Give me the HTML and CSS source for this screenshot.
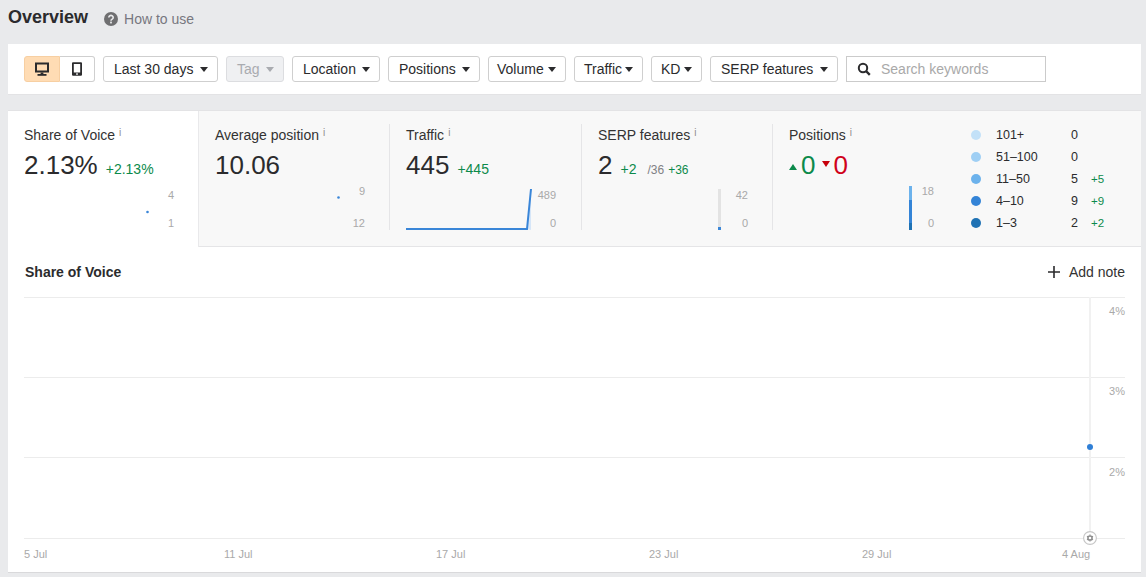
FILE: index.html
```html
<!DOCTYPE html>
<html lang="en">
<head>
<meta charset="utf-8">
<title>Overview</title>
<link rel="stylesheet" href="styles.css">
</head>
<body>
<header class="page-head">
  <h1 class="title">Overview</h1>
  <a class="howto">
    <svg class="help-icon" viewBox="0 0 14 14" width="14" height="14"><circle cx="7" cy="7" r="7" fill="#6f6f71"/><path d="M4.8 5.4a2.2 2 0 1 1 3.4 1.7c-.8.5-1.2.8-1.2 1.6" fill="none" stroke="#e9eaec" stroke-width="1.6"/><rect x="6.1" y="9.6" width="1.8" height="1.8" fill="#e9eaec"/></svg>
    How to use
  </a>
</header>

<section class="toolbar">
  <div class="device-toggle">
    <button class="device active">
      <svg viewBox="0 0 14 14" width="14" height="14"><path d="M0 0.5h14v10H0z M2 2.5v6h10v-6z" fill="#2b2b2d" fill-rule="evenodd"/><rect x="5.6" y="10.5" width="2.8" height="1.5" fill="#2b2b2d"/><rect x="2.5" y="12" width="9" height="1.8" fill="#2b2b2d"/></svg>
    </button>
    <button class="device">
      <svg viewBox="0 0 14 14" width="14" height="14"><path d="M3 0.2h8a1 1 0 0 1 1 1v11.6a1 1 0 0 1-1 1H3a1 1 0 0 1-1-1V1.200a1 1 0 0 1 1-1z M3.800 2v8.400h6.400V2z" fill="#2b2b2d" fill-rule="evenodd"/><rect x="6.200" y="11.300" width="1.600" height="1.500" fill="#fff"/></svg>
    </button>
  </div>
  <button class="drop w-date">Last 30 days<i class="caret"></i></button>
  <button class="drop w-tag disabled">Tag<i class="caret"></i></button>
  <button class="drop w-loc">Location<i class="caret"></i></button>
  <button class="drop w-pos">Positions<i class="caret"></i></button>
  <button class="drop w-vol">Volume<i class="caret"></i></button>
  <button class="drop w-tra">Traffic<i class="caret"></i></button>
  <button class="drop w-kd">KD<i class="caret"></i></button>
  <button class="drop w-serp">SERP features<i class="caret"></i></button>
  <label class="search">
    <svg viewBox="0 0 14 14" width="14" height="14"><circle cx="6" cy="6" r="4.2" fill="none" stroke="#2b2b2d" stroke-width="2"/><path d="M9 9l3.800 3.800" stroke="#2b2b2d" stroke-width="2.400"/></svg>
    <span class="placeholder">Search keywords</span>
  </label>
</section>

<section class="report">
  <div class="tabs">
    <article class="tab active">
      <div class="inner">
        <div class="label">Share of Voice<sup>i</sup></div>
        <div class="value">2.13%<span class="delta">+2.13%</span></div>
        <div class="spark">
          <svg class="plot" width="132" height="42" viewBox="0 0 132 42"><circle cx="123.500" cy="24" r="1.300" fill="#3a86d8"/></svg>
          <div class="axis axis-low"><span>4</span><span>1</span></div>
        </div>
      </div>
    </article>
    <article class="tab sep">
      <div class="inner">
        <div class="label">Average position<sup>i</sup></div>
        <div class="value">10.06</div>
        <div class="spark">
          <svg class="plot" width="132" height="42" viewBox="0 0 132 42"><circle cx="123.500" cy="9.500" r="1.300" fill="#3a86d8"/></svg>
          <div class="axis axis-high"><span>9</span><span>12</span></div>
        </div>
      </div>
    </article>
    <article class="tab sep">
      <div class="inner">
        <div class="label">Traffic<sup>i</sup></div>
        <div class="value">445<span class="delta">+445</span></div>
        <div class="spark">
          <svg class="plot" width="132" height="42" viewBox="0 0 132 42"><path d="M121 41L125 1V42z" fill="#d6e6f8"/><path d="M0 41H121L125 1" fill="none" stroke="#3a86d8" stroke-width="2"/></svg>
          <div class="axis axis-low"><span>489</span><span>0</span></div>
        </div>
      </div>
    </article>
    <article class="tab sep">
      <div class="inner">
        <div class="label">SERP features<sup>i</sup></div>
        <div class="value">2<span class="delta">+2</span><span class="total">/36</span><span class="delta-tight">+36</span></div>
        <div class="spark">
          <svg class="plot" width="132" height="42" viewBox="0 0 132 42"><rect x="120" y="1" width="3" height="38" fill="#e3e3e3"/><rect x="120" y="39" width="3" height="3" fill="#3a86d8"/></svg>
          <div class="axis axis-low"><span>42</span><span>0</span></div>
        </div>
      </div>
    </article>
    <article class="tab positions">
      <div class="inner">
        <div class="label">Positions<sup>i</sup></div>
        <div class="value"><i class="tri up"></i><span class="pos-up">0</span><i class="tri down"></i><span class="pos-down">0</span></div>
        <div class="spark">
          <svg class="plot" width="132" height="42" viewBox="0 0 132 42"><rect x="120" y="-2" width="3" height="14" fill="#6cb2ec"/><rect x="120" y="12" width="3" height="23" fill="#3484d7"/><rect x="120" y="35" width="3" height="7" fill="#1f72b4"/></svg>
          <div class="axis axis-high"><span>18</span><span>0</span></div>
        </div>
      </div>
      <ul class="legend">
        <li><i class="dot d1"></i><span class="range">101+</span><span class="num">0</span></li>
        <li><i class="dot d2"></i><span class="range">51–100</span><span class="num">0</span></li>
        <li><i class="dot d3"></i><span class="range">11–50</span><span class="num">5</span><span class="plus">+5</span></li>
        <li><i class="dot d4"></i><span class="range">4–10</span><span class="num">9</span><span class="plus">+9</span></li>
        <li><i class="dot d5"></i><span class="range">1–3</span><span class="num">2</span><span class="plus">+2</span></li>
      </ul>
    </article>
  </div>

  <div class="chart-head">
    <h2 class="chart-title">Share of Voice</h2>
    <a class="add-note"><svg viewBox="0 0 12 12" width="12" height="12"><path d="M6 0v12M0 6h12" stroke="#2b2b2d" stroke-width="1.600"/></svg>Add note</a>
  </div>

  <div class="chart">
    <div class="band"><span>4%</span></div>
    <div class="band"><span>3%</span></div>
    <div class="band band-last"><span>2%</span></div>
    <div class="baseline"></div>
    <div class="cursor"></div>
    <div class="point"></div>
    <div class="marker"><svg viewBox="0 0 14 14" width="14" height="14"><circle cx="7" cy="7" r="6.400" fill="#fff" stroke="#c6c6c6" stroke-width="1.100"/><circle cx="7" cy="7" r="2.100" fill="none" stroke="#8c8c8c" stroke-width="1.500"/><path d="M7 3.600v1M7 9.400v1M4 5.300l.9.500M9.100 8.200l.9.500M4 8.700l.9-.5M9.100 5.800l.9-.5" stroke="#8c8c8c" stroke-width="1.200"/></svg></div>
  </div>
  <div class="ticks"><span>5 Jul</span><span>11 Jul</span><span>17 Jul</span><span>23 Jul</span><span>29 Jul</span><span>4 Aug</span></div>
</section>
</body>
</html>
```

FILE: styles.css
```css
* { box-sizing: border-box; }
html, body { height: 100%; }
body {
  margin: 0;
  padding: 0 5px 0 8px;
  height: 577px;
  overflow: hidden;
  background: #e9eaec;
  color: #2b2b2d;
  font-family: "Liberation Sans", Arial, sans-serif;
  font-size: 14px;
}
button { font: inherit; color: inherit; margin: 0; }

.page-head { display: flex; align-items: center; height: 44px; padding-bottom: 8px; }
.title { margin: 0; font-size: 18px; font-weight: 700; line-height: 20px; color: #2b2b2d; position: relative; top: -1px; }
.howto { display: flex; align-items: center; gap: 6px; margin-left: 16px; color: #77777f; font-size: 14px; position: relative; top: 1px; }
.help-icon { display: block; }

.toolbar {
  display: flex;
  align-items: center;
  gap: 8px;
  height: 51px;
  padding: 0 16px;
  background: #fff;
  border-bottom: 1px solid #e3e3e5;
}
.device-toggle { display: flex; height: 26px; width: 71px; }
.device {
  flex: 1;
  display: flex;
  align-items: center;
  justify-content: center;
  padding: 0;
  background: #fff;
  border: 1px solid #cfcfcf;
  border-left: 0;
  border-radius: 0 3px 3px 0;
}
.device.active { background: #ffdcb4; border: 1px solid #f7cfa2; border-radius: 3px 0 0 3px; }
.drop {
  display: flex;
  align-items: center;
  justify-content: space-between;
  height: 26px;
  padding: 0 9px 0 10px;
  background: #fff;
  border: 1px solid #cfcfcf;
  border-radius: 3px;
  white-space: nowrap;
}
.w-date { width: 115px; }
.w-tag { width: 58px; }
.w-loc { width: 88px; }
.w-pos { width: 92px; }
.w-vol { width: 78px; padding-left: 8px; }
.w-tra { width: 69px; padding-left: 9px; }
.w-kd { width: 51px; padding-left: 9px; }
.w-serp { width: 128px; }
.caret { width: 0; height: 0; border-left: 4px solid transparent; border-right: 4px solid transparent; border-top: 5px solid #2b2b2d; }
.drop.disabled { background: #eff0f2; border-color: #dcdde0; color: #a9abb0; }
.drop.disabled .caret { border-top-color: #a9abb0; }
.search {
  display: flex;
  align-items: center;
  width: 200px;
  height: 26px;
  padding-left: 10px;
  border: 1px solid #cbcbcb;
  background: #fff;
}
.placeholder { margin-left: 10px; color: #a9a9a9; }

.report {
  margin-top: 15px;
  height: 463px;
  background: #fff;
  border-top: 1px solid #e3e3e5;
  border-bottom: 1px solid #d9d9db;
}
.tabs {
  display: grid;
  grid-template-columns: 191px 191px 192px 191px 1fr;
  height: 136px;
  background: #f8f8f8;
  border-bottom: 1px solid #e5e5e7;
}
.tab { padding: 13px 0 0 16px; }
.tab.active { background: #fff; height: 136px; border-right: 1px solid #e9e9eb; }
.tab.sep .inner { border-right: 1px solid #e5e5e7; }
.inner { height: 106px; }
.label { font-size: 14px; line-height: 22px; height: 22px; color: #333; white-space: nowrap; }
.label sup { font-size: 10px; margin-left: 4px; color: #8e8e8e; line-height: 0; vertical-align: 4px; }
.value { display: flex; align-items: baseline; font-size: 26px; line-height: 32px; height: 32px; margin-top: 3px; color: #2b2b2d; }
.delta { margin-left: 8px; font-size: 14px; color: #0c8a4b; }
.total { margin-left: 11px; font-size: 12px; color: #808084; }
.delta-tight { margin-left: 4px; font-size: 12px; color: #0c8a4b; }
.spark { display: flex; height: 42px; margin-top: 7px; }
.plot { display: block; flex: none; overflow: visible; }
.axis { display: flex; flex-direction: column; justify-content: space-between; align-items: flex-end; width: 18px; font-size: 11px; line-height: 12px; color: #a9a9a9; }
.axis-low { height: 40px; margin-top: 1px; }
.axis-high { height: 44px; margin-top: -3px; }

.tab.positions { display: flex; }
.tab.positions .inner { width: 145px; flex: none; }
.pos-up { color: #0c8a4b; }
.pos-down { color: #d0021b; }
.tri { width: 0; height: 0; border-left: 4px solid transparent; border-right: 4px solid transparent; align-self: center; }
.tri.up { border-bottom: 6px solid #0c8a4b; margin-right: 4px; position: relative; top: 2px; }
.tri.down { border-left-width: 4.5px; border-right-width: 4.5px; border-top: 6px solid #c7000b; margin: 0 3px 0 7px; position: relative; top: -1px; }

.legend { list-style: none; margin: 0 0 0 37px; padding: 0; font-size: 12.5px; }
.legend li { display: flex; align-items: center; height: 22px; }
.dot { width: 10px; height: 10px; border-radius: 50%; margin-right: 15px; flex: none; }
.d1 { background: #c3e1f8; }
.d2 { background: #9fcff4; }
.d3 { background: #6cb2ec; }
.d4 { background: #3484d7; }
.d5 { background: #1f72b4; }
.range { width: 75px; }
.num { width: 20px; }
.plus { color: #0c8a4b; font-size: 11.5px; }

.chart-head { display: flex; justify-content: space-between; align-items: center; height: 50px; padding: 0 16px 0 17px; }
.chart-title { margin: 0; font-size: 14px; font-weight: 700; color: #2b2b2d; }
.add-note { display: flex; align-items: center; gap: 9px; color: #333; font-size: 14px; }

.chart { position: relative; margin: 0 16px; }
.band { height: 80px; border-top: 1px solid #ececec; display: flex; justify-content: flex-end; padding-top: 7px; }
.band-last { height: 81px; padding-top: 8px; }
.band span { font-size: 11px; line-height: 12px; color: #a9a9a9; }
.baseline { height: 1px; border-top: 1px solid #ececec; }
.cursor { position: absolute; left: 1065px; top: 0; bottom: 0; width: 2px; background: #f1f1f1; }
.point { position: absolute; left: 1063px; top: 147px; width: 6px; height: 6px; border-radius: 50%; background: #2f7fd6; }
.marker { position: absolute; left: 1059px; top: 234px; width: 14px; height: 14px; }
.marker svg { display: block; }

.ticks {
  display: grid;
  grid-template-columns: 200px 212px 213px 213px 200px auto;
  margin: 9px 16px 0;
  font-size: 11px;
  line-height: 12px;
  color: #a9a9a9;
}
```
